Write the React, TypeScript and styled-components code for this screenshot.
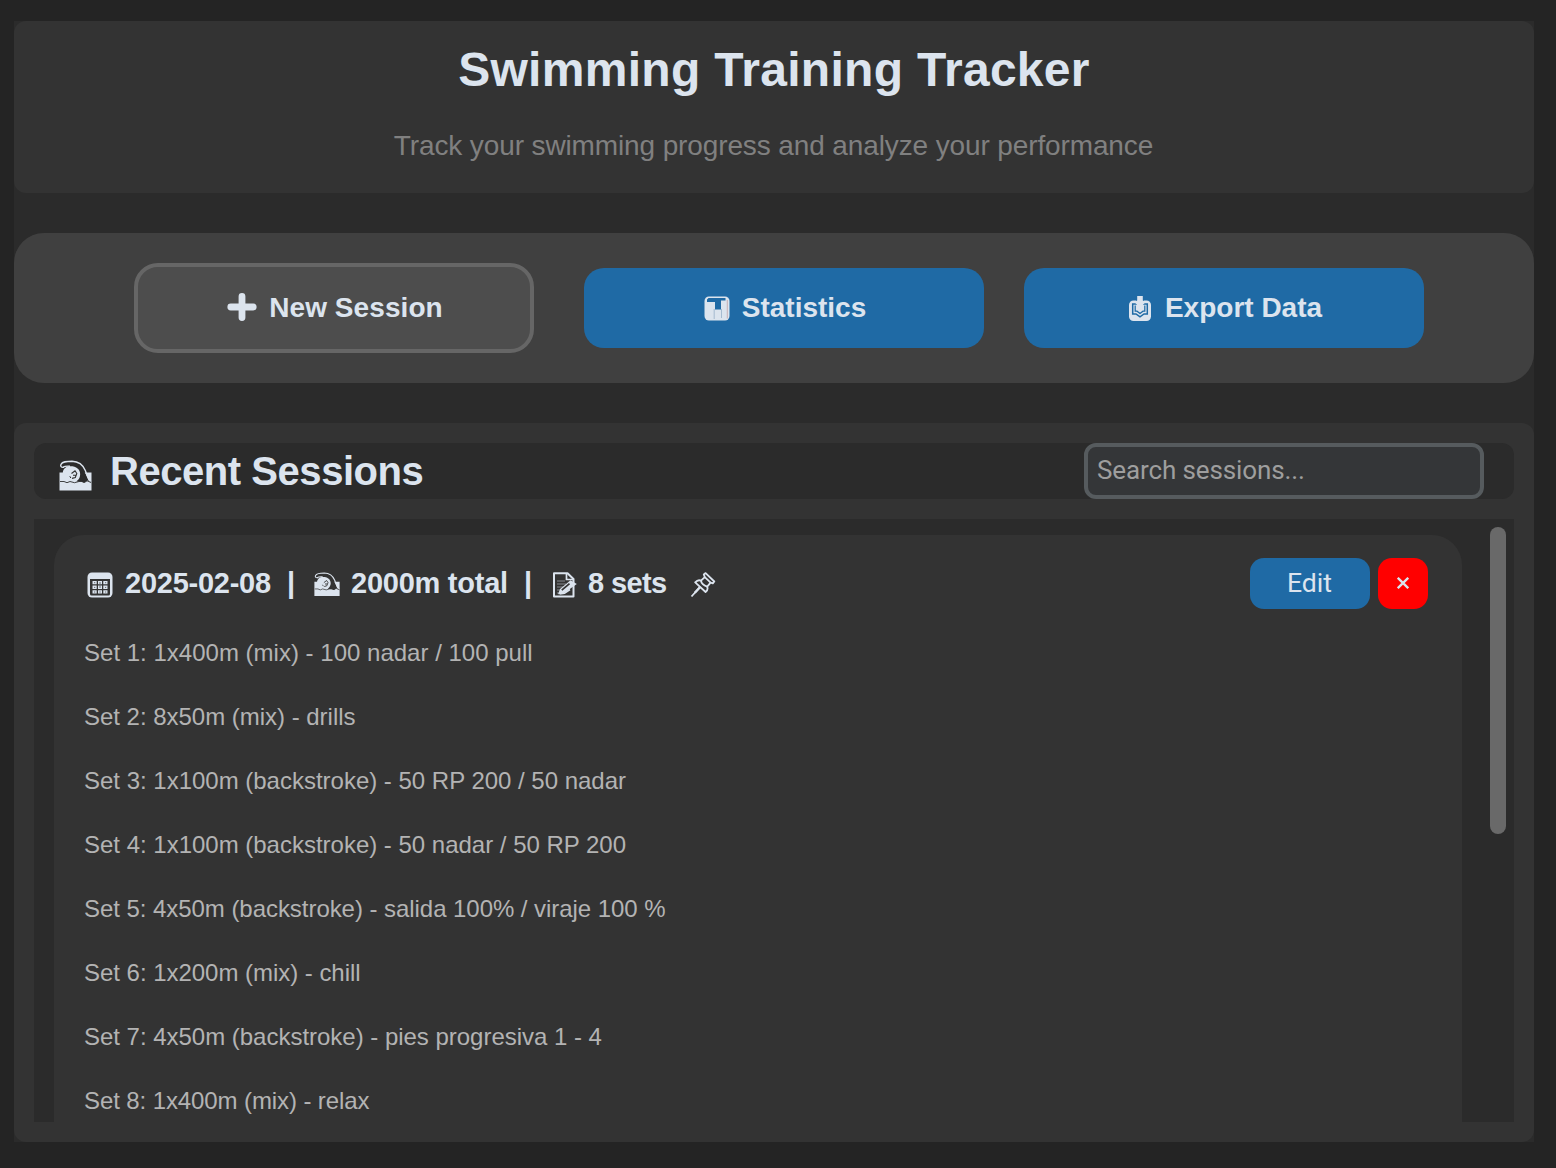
import React from "react";
import styled, { createGlobalStyle } from "styled-components";

const GlobalStyle = createGlobalStyle`
  * { box-sizing: border-box; }
  body { margin: 0; background: #242424; color: #dce4ee; font-family: "Liberation Sans", Arial, sans-serif; }
  button, input { font: inherit; color: inherit; margin: 0; }
`;

const Page = styled.div`
  width: 1556px;
  height: 1168px;
  padding: 21px 22px 26px 14px;
  overflow: hidden;
`;

const Main = styled.main`
  display: flex;
  flex-direction: column;
  gap: 40px;
  height: 1121px;
  background: #2b2b2b;
`;

const Header = styled.header`
  height: 172px;
  padding-top: 21px;
  border-radius: 12px;
  background: #333333;
  text-align: center;
`;

const Title = styled.h1`
  margin: 0;
  font-size: 48px;
  line-height: 56px;
  letter-spacing: 0.3px;
`;

const Subtitle = styled.p`
  margin: 32px 0 0;
  padding-right: 1px;
  font-size: 28px;
  line-height: 32px;
  letter-spacing: -0.12px;
  color: #808080;
`;

const Toolbar = styled.nav`
  display: flex;
  align-items: center;
  height: 150px;
  padding-left: 120px;
  border-radius: 30px;
  background: #404040;
`;

const ActionButton = styled.button<{ $outlined?: boolean }>`
  display: flex;
  align-items: center;
  justify-content: center;
  width: 400px;
  height: ${(p) => (p.$outlined ? 90 : 80)}px;
  margin-right: ${(p) => (p.$outlined ? 50 : 40)}px;
  padding: 0 0 0 2px;
  border: ${(p) => (p.$outlined ? "4px solid #666666" : "0")};
  border-radius: ${(p) => (p.$outlined ? 24 : 20)}px;
  background: ${(p) => (p.$outlined ? "#4d4d4d" : "#1f6aa5")};
  font-size: 28px;
  font-weight: 700;
  line-height: 32px;
`;

const Sessions = styled.section`
  height: 719px;
  padding: 20px;
  border-radius: 12px;
  background: #333333;
`;

const SessionsBar = styled.div`
  display: flex;
  align-items: center;
  justify-content: space-between;
  height: 56px;
  padding: 0 30px 0 25px;
  border-radius: 12px;
  background: #2b2b2b;
`;

const Heading = styled.h2`
  display: flex;
  align-items: center;
  margin: 0;
  font-size: 40px;
  line-height: 46px;
`;

const Search = styled.input`
  width: 400px;
  height: 56px;
  padding: 0 9px 2px;
  border: 4px solid #565b5e;
  border-radius: 12px;
  outline: 0;
  background: #343638;
  font-family: Roboto, sans-serif;
  font-size: 26px;
  letter-spacing: -0.12px;
  &::placeholder { color: #9e9e9e; opacity: 1; }
`;

const List = styled.div`
  display: flex;
  justify-content: space-between;
  height: 603px;
  margin-top: 20px;
  padding: 8px 8px 0 20px;
  overflow: hidden;
  background: #2b2b2b;
`;

const Card = styled.article`
  width: 1408px;
  height: 700px;
  margin-top: 8px;
  padding: 23px 34px 0 30px;
  border-radius: 30px;
  background: #333333;
`;

const ScrollThumb = styled.div`
  width: 16px;
  height: 307px;
  border-radius: 8px;
  background: #696969;
`;

const CardTop = styled.div`
  display: flex;
  align-items: center;
  height: 51px;
`;

const Label = styled.span<{ $left?: number; $width?: number; $spacing?: number }>`
  flex: none;
  margin-left: ${(p) => p.$left ?? 0}px;
  width: ${(p) => (p.$width ? `${p.$width}px` : "auto")};
  letter-spacing: ${(p) => p.$spacing ?? 0}px;
  white-space: pre;
`;

const Summary = styled.div`
  display: flex;
  flex: 1;
  align-items: center;
  height: 51px;
  padding-left: 3px;
  font-size: 29px;
  font-weight: 700;
  line-height: 32px;
  ${Label} { margin-bottom: 2px; }
`;

const CardButton = styled.button<{ $danger?: boolean }>`
  width: ${(p) => (p.$danger ? 50 : 120)}px;
  height: 51px;
  margin-left: ${(p) => (p.$danger ? 8 : 0)}px;
  padding: ${(p) => (p.$danger ? "0 0 2px" : "0 1px 2px 0")};
  border: 0;
  border-radius: 14px;
  background: ${(p) => (p.$danger ? "#ff0000" : "#1f6aa5")};
  font-family: Roboto, sans-serif;
  font-size: 26.6px;
`;

const SetList = styled.ul`
  margin: 12px 0 0;
  padding: 0;
  list-style: none;
`;

const SetRow = styled.li<{ $spacing: number }>`
  height: 64px;
  font-size: 24px;
  line-height: 64px;
  letter-spacing: ${(p) => p.$spacing}px;
  color: #b3b3b3;
`;

const Glyph = styled.svg<{ $w: number; $h: number; $mt?: number }>`
  display: block;
  flex: none;
  width: ${(p) => p.$w}px;
  height: ${(p) => p.$h}px;
  margin-top: ${(p) => p.$mt ?? 0}px;
`;

const INK = "#dce4ee";

const PlusIcon = () => (
  <Glyph $w={30} $h={28} $mt={-2} viewBox="0 0 30 28">
    <path d="M15 3.4V24.6M3.8 14H26.2" stroke={INK} strokeWidth="6.8" strokeLinecap="round" />
  </Glyph>
);

const ChartIcon = () => (
  <Glyph $w={26} $h={25} $mt={1} viewBox="0 0 26 25">
    <rect x="0.5" y="0.5" width="25" height="24" rx="4.5" fill={INK} />
    <path d="M3 6V3.5L4.5 2H21.5V4.5H17V13.5H11V6Z" fill="#1f6aa5" />
    <path d="M10.2 13V23M17.5 13V22" stroke="#9fb6cc" strokeWidth="0.9" />
    <path d="M23.3 4V22.5" stroke="#c5a9af" strokeWidth="0.9" />
  </Glyph>
);

const ExportIcon = () => (
  <Glyph $w={24} $h={26} $mt={1} viewBox="0 0 24 26">
    <rect x="1" y="4.5" width="22" height="20.5" rx="4.5" fill={INK} />
    <path d="M9 8H4.7V18H8L12 20.8 16 18H19.3V8H15" fill="none" stroke="#1f6aa5" strokeWidth="1.5" />
    <path d="M7.2 9.5V15.2H9L12 17.5 15 15.2H16.8V9.5" fill="none" stroke="#1f6aa5" strokeWidth="1.2" />
    <path d="M9.2 0H14.8V6.8H17L12 11.8 7 6.8H9.2Z" fill={INK} />
    <path d="M8.5 2V4.6M15.5 2V4.6" stroke="#1f6aa5" />
  </Glyph>
);

const WaveIcon = ({ size, top }: { size: number; top: number }) => (
  <Glyph $w={size} $h={(size * 31) / 33} $mt={top} viewBox="0 0 33 31" fill="none">
    <path d="M0.5 12.5H3.8C4.2 9.5 6 6.8 10 6.3H13.5C19 7.2 22 11 21 16C20.6 18.5 19 20 17.5 21.5H22L25 22.7 28.5 20.5 32.5 22V30.5H0.5Z" fill={INK} />
    <path d="M25.7 12.5H32.5V22L29.5 20.5C28 17 27.5 15 25.7 12.5Z" fill={INK} />
    <path d="M5 7.3C2 7.8 1.2 6 2 4.3C3.5 1.5 7 1.3 13 1.3C20 1.5 24 5 26.3 10.5C28 15.2 29 19.2 32 21.5" stroke={INK} strokeWidth="1.4" />
    <path d="M4 7.3C6 5.8 8 6 11 6.2" stroke={INK} strokeWidth="1.4" />
    <path d="M12.5 13.5 16 10.8 17.8 13.5 16.3 17.5 13 18.4M14 15.2H16.5" stroke="#303030" strokeWidth="1.1" />
    <path d="M10.8 16.2 11.8 18" stroke="#303030" strokeWidth="1" />
    <path d="M1 21.5H5L8 22.7 11 21.5 15.5 22.7 20 21.5H23L25.5 22.5 28 20.8 32 22.5" stroke="#303030" strokeWidth="0.9" />
  </Glyph>
);

const CalendarIcon = () => (
  <Glyph $w={26} $h={26} $mt={2} viewBox="0 0 26 26">
    <rect x="0.5" y="0.5" width="25" height="25" rx="4.5" fill={INK} />
    <path d="M3 7H23V22Q23 23.5 21.5 23.5H4.5Q3 23.5 3 22Z" fill="#333" />
    <g fill={INK}>
      <path d="M5.5 9H9.7V12.3H5.5ZM11 9H15V12.3H11ZM16.3 9H20.5V12.3H16.3ZM5.5 13.6H9.7V17H5.5ZM11 13.6H15V17H11ZM16.3 13.6H20.5V17H16.3ZM5.5 18.3H9.7V21.6H5.5ZM11 18.3H15V21.6H11ZM16.3 18.3H20.5V21.6H16.3Z" />
    </g>
    <path d="M13 10V16M7 10.7H8.3M18 10.7H19.2M7 15.4H8.3M18 15.4H19.2M7 20H8.3M12.4 20H13.7M18 20H19.2" stroke="#686c71" />
  </Glyph>
);

const MemoIcon = () => (
  <Glyph $w={26} $h={26} $mt={2} viewBox="0 0 26 26" fill="none">
    <path d="M2 1.2H15.5L21.5 7V24.5H2Z" stroke={INK} strokeWidth="2" strokeLinejoin="round" />
    <path d="M14.5 1.5V7.5H21" stroke={INK} strokeWidth="1.7" />
    <path d="M5 9H13M5 12H14M5 15H11M5 18H9M5 21H8" stroke="#858a90" strokeWidth="1.2" />
    <path d="M6 22.3 8 17 18.5 8.2 24.8 12 12.2 21Z" fill={INK} />
    <path d="M9.8 18.2 17.5 11.7" stroke="#333" strokeWidth="1.7" />
    <path d="M7.5 21.8 12.5 21.3 18 17.5" stroke={INK} strokeWidth="1.7" />
  </Glyph>
);

const PinIcon = () => (
  <Glyph $w={26} $h={26} $mt={3} viewBox="0 0 26 26" fill="none" stroke={INK} strokeWidth="1.8" strokeLinejoin="round">
    <path d="M13.8 2.4 15.6 1.1 24.3 9.5 22.8 11.3 20.6 10.7 17.2 14.6Q18.4 18 15.6 20L5.2 10.4Q8 7.2 11 8.7L14.8 5.2Z" />
    <path d="M14.8 5.2 20.6 10.7M11 8.7Q11.5 12.8 17.2 14.6M10.2 14.8 1.5 24.5" />
    <path d="M10.2 15 4.8 20.8" strokeWidth="2.3" />
  </Glyph>
);

const CrossGlyph = styled(Glyph)`
  margin: 1px auto 0;
`;

const CrossIcon = () => (
  <CrossGlyph $w={12} $h={12} viewBox="0 0 12 12">
    <path d="M0.8 0.8 11.2 11.2M11.2 0.8 0.8 11.2" stroke={INK} strokeWidth="2.3" />
  </CrossGlyph>
);

const sets = [
  { text: "1x400m (mix) - 100 nadar / 100 pull", spacing: 0.01 },
  { text: "8x50m (mix) - drills", spacing: -0.02 },
  { text: "1x100m (backstroke) - 50 RP 200 / 50 nadar", spacing: -0.01 },
  { text: "1x100m (backstroke) - 50 nadar / 50 RP 200", spacing: -0.01 },
  { text: "4x50m (backstroke) - salida 100% / viraje 100 %", spacing: -0.05 },
  { text: "1x200m (mix) - chill", spacing: -0.03 },
  { text: "4x50m (backstroke) - pies progresiva 1 - 4", spacing: -0.02 },
  { text: "1x400m (mix) - relax", spacing: -0.1 },
];

export default function App() {
  return (
    <Page>
      <GlobalStyle />
      <Main>
        <Header>
          <Title>Swimming Training Tracker</Title>
          <Subtitle>Track your swimming progress and analyze your performance</Subtitle>
        </Header>
        <Toolbar>
          <ActionButton $outlined>
            <PlusIcon />
            <Label $left={12} $spacing={0.07}>New Session</Label>
          </ActionButton>
          <ActionButton>
            <ChartIcon />
            <Label $left={12}>Statistics</Label>
          </ActionButton>
          <ActionButton>
            <ExportIcon />
            <Label $left={13}>Export Data</Label>
          </ActionButton>
        </Toolbar>
        <Sessions>
          <SessionsBar>
            <Heading>
              <WaveIcon size={33} top={9} />
              <Label $left={18} $spacing={-0.45}>Recent Sessions</Label>
            </Heading>
            <Search placeholder="Search sessions..." />
          </SessionsBar>
          <List>
            <Card>
              <CardTop>
                <Summary>
                  <CalendarIcon />
                  <Label $left={12} $width={162} $spacing={-0.25}>2025-02-08</Label>
                  <Label $width={27}>|</Label>
                  <WaveIcon size={26} top={1} />
                  <Label $left={11} $width={173} $spacing={-0.25}>2000m total</Label>
                  <Label $width={28}>|</Label>
                  <MemoIcon />
                  <Label $left={10} $width={102} $spacing={-0.6}>8 sets</Label>
                  <PinIcon />
                </Summary>
                <CardButton>Edit</CardButton>
                <CardButton $danger aria-label="Delete"><CrossIcon /></CardButton>
              </CardTop>
              <SetList>
                {sets.map(({ text, spacing }, i) => (
                  <SetRow key={text} $spacing={spacing}>{`Set ${i + 1}: ${text}`}</SetRow>
                ))}
              </SetList>
            </Card>
            <ScrollThumb />
          </List>
        </Sessions>
      </Main>
    </Page>
  );
}
